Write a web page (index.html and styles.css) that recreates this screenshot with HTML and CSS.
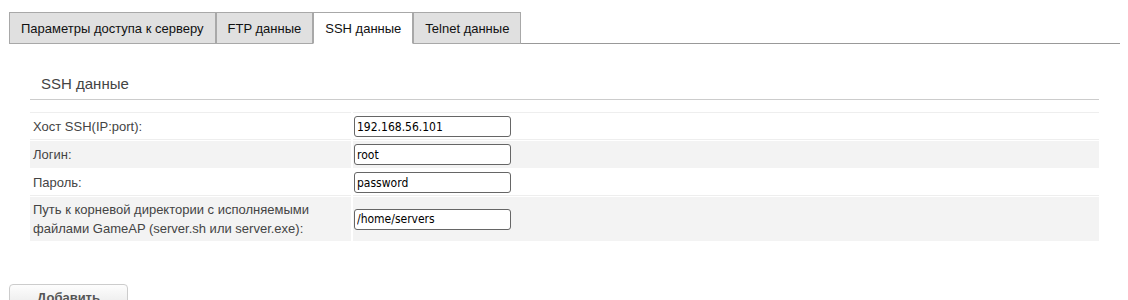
FILE: index.html
```html
<!DOCTYPE html>
<html lang="ru">
<head>
  <meta charset="UTF-8">
  <title>Сервер — SSH данные</title>
  <link rel="stylesheet" href="styles.css">
</head>
<body>
  <div id="tabs">
    <ul class="tab-list">
      <li class="tab">Параметры доступа к серверу</li>
      <li class="tab">FTP данные</li>
      <li class="tab active">SSH данные</li>
      <li class="tab">Telnet данные</li>
    </ul>
  </div>

  <div id="ssh-panel">
    <h3 class="panel-title">SSH данные</h3>
    <table class="form-table">
      <tr>
        <td class="label">Хост SSH(IP:port):</td>
        <td class="field"><input type="text" value="192.168.56.101"></td>
      </tr>
      <tr class="alt">
        <td class="label">Логин:</td>
        <td class="field"><input type="text" value="root"></td>
      </tr>
      <tr>
        <td class="label">Пароль:</td>
        <td class="field"><input type="text" value="password"></td>
      </tr>
      <tr class="alt">
        <td class="label">Путь к корневой директории с исполняемыми<br>файлами GameAP (server.sh или server.exe):</td>
        <td class="field"><input type="text" value="/home/servers"></td>
      </tr>
    </table>
  </div>

  <div id="footer">
    <button class="btn">Добавить</button>
  </div>
</body>
</html>
```

FILE: styles.css
```css
body {
  margin: 0;
  font-family: "Liberation Sans", Arial, sans-serif;
  font-size: 13px;
  color: #444;
  background: #fff;
}

#tabs {
  padding: 12px 8px 0 9px;
}

.tab-list {
  display: flex;
  margin: 0;
  padding: 0;
  list-style: none;
  border-bottom: 1px solid #999;
}

.tab {
  padding: 0 11px;
  height: 30px;
  line-height: 32px;
  margin-bottom: -1px;
  border: 1px solid #a8a8a8;
  background: #e0e0e0;
  color: #111;
}

.tab.active {
  background: #fff;
  border-bottom-color: #fff;
}

#ssh-panel {
  margin: 31px 29px 0 30px;
}

.panel-title {
  margin: 0;
  padding: 0 0 6px 11px;
  font-size: 15px;
  font-weight: normal;
  line-height: 18px;
  color: #444;
  border-bottom: 1px solid #ccc;
}

.form-table {
  width: calc(100% + 4px);
  margin: 11px -2px 0;
  border-collapse: separate;
  border-spacing: 2px 1px;
}

.form-table td {
  padding: 3px 3px 2px;
  border-bottom: 1px solid #eee;
  vertical-align: middle;
}

.form-table tr:first-child td {
  border-top: 1px solid #eee;
}

.form-table tr.alt td {
  background: #f3f3f3;
  border-bottom-color: #f3f3f3;
}

.form-table td.label {
  width: 315px;
  line-height: 19px;
}

.form-table td.field {
  padding-left: 1px;
}

.form-table input {
  box-sizing: border-box;
  width: 157px;
  height: 21px;
  padding: 0 2px;
  border: 1px solid #666;
  border-radius: 3px;
  font-family: "DejaVu Sans Condensed", "DejaVu Sans", sans-serif;
  font-size: 12px;
  color: #000;
  display: block;
}

#footer {
  padding: 42px 0 0 9px;
}

.btn {
  width: 119px;
  height: 28px;
  padding: 0 0 2px;
  border: 1px solid #ccc;
  border-radius: 4px;
  background: linear-gradient(#fdfdfd, #e6e6e6);
  font-family: "Liberation Sans", Arial, sans-serif;
  font-size: 13px;
  font-weight: bold;
  color: #555;
}
```
